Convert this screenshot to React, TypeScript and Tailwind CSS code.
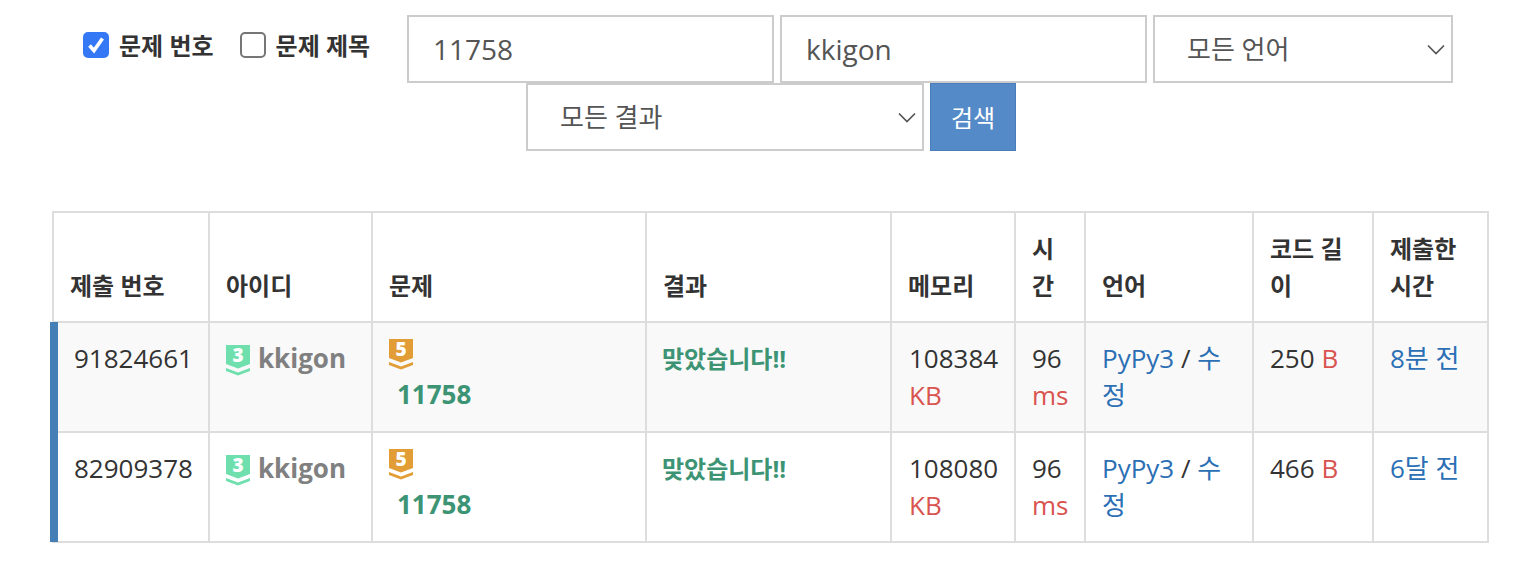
const columns = [
  { title: "제출 번호", width: "w-[156px]" },
  { title: "아이디", width: "w-[163px]" },
  { title: "문제", width: "w-[274px]" },
  { title: "결과", width: "w-[245px]" },
  { title: "메모리", width: "w-[124px]" },
  { title: "시간", width: "w-[70px]" },
  { title: "언어", width: "w-[168px]" },
  { title: "코드 길이", width: "w-[120px]" },
  { title: "제출한 시간", width: "w-[115px]" },
];

const rows = [
  { id: "91824661", memory: "108384", length: "250", when: "8분 전", striped: true },
  { id: "82909378", memory: "108080", length: "466", when: "6달 전", striped: false },
];

function Tier({ level, color, light }: { level: string; color: string; light: string }) {
  return (
    <svg width="24" height="31" viewBox="0 0 24 31" className="inline-block align-top">
      <path d="M0 0H24V19L12 23.5L0 19Z" fill={color} />
      <path d="M0 23L12 27.5L24 23V26L12 30.5L0 26Z" fill={light} />
      <text x="12" y="17" textAnchor="middle" fontSize="19" fontWeight="800" fill="#fff">
        {level}
      </text>
    </svg>
  );
}

function Check({ checked, label }: { checked: boolean; label: string }) {
  return (
    <label className="flex items-center gap-[10px] h-[30px] font-bold text-[24px] text-[#333]">
      {checked ? (
        <span className="w-[26px] h-[26px] rounded-[5px] bg-[#3478f6] flex items-center justify-center">
          <svg width="20" height="20" viewBox="0 0 20 20" fill="none">
            <path d="M3.5 10.5L8 15.5L16.5 3.5" stroke="#fff" strokeWidth="3.6" />
          </svg>
        </span>
      ) : (
        <span className="w-[26px] h-[26px] rounded-[5px] border-2 border-[#767676] bg-white" />
      )}
      {label}
    </label>
  );
}

function Select({ label, width }: { label: string; width: string }) {
  return (
    <div className={`relative h-[68px] ${width}`}>
      <select className="appearance-none w-full h-full border-2 border-[#ccc] bg-white pl-[32px] text-[26px] text-[#555] outline-none">
        <option>{label}</option>
      </select>
      <svg
        width="18"
        height="12"
        viewBox="0 0 18 12"
        fill="none"
        className="absolute right-[8px] top-[29px]"
      >
        <path d="M1 1.5L9 9.5L17 1.5" stroke="#555" strokeWidth="1.7" />
      </svg>
    </div>
  );
}

export default function App() {
  return (
    <div className="bg-white h-[564px] overflow-hidden pt-[15px] font-['Open_Sans','Noto_Sans_CJK_KR',sans-serif] text-[26px] leading-[37px] text-[#333]">
      <form className="flex pl-[83px]">
        <div className="flex gap-[26px] w-[324px] pt-[15px] items-start">
          <Check checked label="문제 번호" />
          <Check checked={false} label="문제 제목" />
        </div>
        <div className="flex gap-[6px]">
          <input
            readOnly
            value="11758"
            className="w-[367px] h-[68px] border-2 border-[#ccc] px-[24px] text-[28px] text-[#555] outline-none"
          />
          <input
            readOnly
            value="kkigon"
            className="w-[367px] h-[68px] border-2 border-[#ccc] px-[24px] text-[28px] text-[#555] outline-none"
          />
          <Select label="모든 언어" width="w-[300px]" />
        </div>
      </form>
      <div className="flex gap-[6px] pl-[526px]">
        <Select label="모든 결과" width="w-[398px]" />
        <button className="w-[86px] h-[68px] bg-[#558ac8] border border-[#4a7cb8] text-white text-[24px]">
          검색
        </button>
      </div>

      <table className="table-fixed border-collapse w-[1435px] ml-[52px] mt-[60px]">
        <colgroup>
          {columns.map((col) => (
            <col key={col.title} className={col.width} />
          ))}
        </colgroup>
        <thead>
          <tr>
            {columns.map((col) => (
              <th
                key={col.title}
                className="border-2 border-[#ddd] px-[16px] pt-[17px] pb-[17px] align-bottom text-left font-bold text-[24px] leading-[37px]"
              >
                {col.title}
              </th>
            ))}
          </tr>
        </thead>
        <tbody>
          {rows.map((row) => (
            <tr key={row.id} className={row.striped ? "bg-[#f9f9f9]" : "bg-white"}>
              <td className="relative border-2 border-[#ddd] pl-[20px] pr-[16px] py-[17px] align-top">
                <span className="absolute left-[-4px] top-[-1px] bottom-[-1px] w-[8px] bg-[#457fb5]" />
                {row.id}
              </td>
              <td className="border-2 border-[#ddd] px-[16px] py-[17px] align-top">
                <span className="flex items-start gap-[8px] font-bold text-[#808080]">
                  <span className="pt-[5px]">
                    <Tier level="3" color="#6fdfae" light="#6fdfae" />
                  </span>
                  kkigon
                </span>
              </td>
              <td className="border-2 border-[#ddd] px-[16px] pt-[16px] pb-[17px] align-top">
                <div className="h-[37px]">
                  <Tier level="5" color="#e29d36" light="#e29d36" />
                </div>
                <div className="pl-[8px] font-bold text-[#3c9475]">11758</div>
              </td>
              <td className="border-2 border-[#ddd] px-[15px] py-[17px] align-top font-bold text-[24px] text-[#3c9475]">
                맞았습니다!!
              </td>
              <td className="border-2 border-[#ddd] pl-[17px] pr-[8px] py-[17px] align-top">
                {row.memory}
                <div className="text-[#d9534f]">KB</div>
              </td>
              <td className="border-2 border-[#ddd] px-[16px] py-[17px] align-top">
                96
                <div className="text-[#d9534f]">ms</div>
              </td>
              <td className="border-2 border-[#ddd] px-[16px] py-[17px] align-top text-[#2b6fb5]">
                PyPy3 <span className="text-[#333]">/</span> 수정
              </td>
              <td className="border-2 border-[#ddd] px-[16px] py-[17px] align-top">
                {row.length} <span className="text-[#d9534f]">B</span>
              </td>
              <td className="border-2 border-[#ddd] px-[16px] py-[17px] align-top text-[#2b6fb5]">
                {row.when}
              </td>
            </tr>
          ))}
        </tbody>
      </table>
    </div>
  );
}
